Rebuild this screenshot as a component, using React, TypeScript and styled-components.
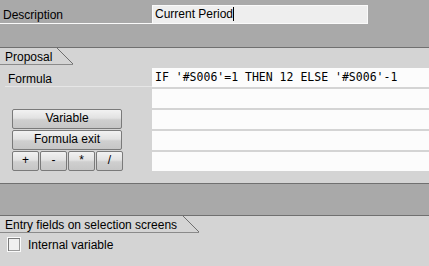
import React from 'react'
import styled, { createGlobalStyle } from 'styled-components'

const GlobalStyle = createGlobalStyle`
	body {
		margin: 0;
		background: #d4d4d4;
		font-family: "Liberation Sans", Arial, sans-serif;
		font-size: 12px;
		color: #000;
	}
`

const Screen = styled.div`
	width: 429px;
	height: 266px;
	overflow: hidden;
	background: #d4d4d4;
`

const Band = styled.div<{ $height: number; $top?: boolean }>`
	height: ${({ $height }) => $height}px;
	background: #a9a9a9;
	border-top: ${({ $top }) => ($top ? '1px solid #707070' : 'none')};
	border-bottom: 1px solid #707070;
`

const FieldRow = styled.div`
	display: flex;
	align-items: flex-start;
`

const BandLabel = styled.div`
	width: 152px;
	height: 24px;
	padding: 8px 0 0 3px;
	box-sizing: border-box;
	line-height: 14px;
	border-bottom: 1px solid #fafafa;
`

const TextInput = styled.div`
	margin-top: 5px;
	width: 216px;
	height: 19px;
	box-sizing: border-box;
	background: #eeeeee;
	border: 1px solid #fafafa;
	padding: 1px 0 0 2px;
	line-height: 14px;
`

const Caret = styled.span`
	display: inline-block;
	width: 1px;
	height: 14px;
	background: #000;
	vertical-align: top;
`

const TabStrip = styled.div`
	display: flex;
	height: 17px;
`

const TabLabel = styled.div<{ $width: number }>`
	width: ${({ $width }) => $width}px;
	padding: 3px 0 0 5px;
	box-sizing: border-box;
	line-height: 12px;
	white-space: nowrap;
	border-bottom: 1px solid #8a8a8a;
`

const TabCut = styled.div`
	width: 16px;
	border-bottom: 1px solid #8a8a8a;
	background: linear-gradient(
		to top right,
		transparent calc(50% - 0.7px),
		#6e6e6e calc(50% - 0.7px),
		#6e6e6e calc(50% + 0.7px),
		transparent calc(50% + 0.7px)
	);
`

const FormGrid = styled.div`
	display: grid;
	grid-template-columns: 152px 1fr;
	grid-auto-rows: 19px;
	row-gap: 2px;
	padding-top: 3px;
`

const RowLabel = styled.div`
	margin-left: 5px;
	padding: 4px 0 0 3px;
	line-height: 14px;
	border-bottom: 1px solid #e6e6e6;
`

const Cell = styled.div`
	display: flex;
	align-items: flex-start;
	padding-left: 12px;
`

const Field = styled.div`
	background: #fcfcfc;
	padding: 3px 0 0 3px;
	font-family: "DejaVu Sans Mono", "Liberation Mono", monospace;
	font-size: 11.5px;
	line-height: 13px;
	white-space: pre;
`

const Button = styled.div<{ $width: number }>`
	width: ${({ $width }) => $width}px;
	height: 20px;
	margin-top: -1px;
	box-sizing: border-box;
	border: 1px solid #7a7a7a;
	border-radius: 2px;
	background: linear-gradient(to bottom, #f2f2f2 0%, #e2e2e2 45%, #cfcfcf 55%, #c6c6c6 100%);
	text-align: center;
	line-height: 17px;
	& + & {
		margin-left: 1px;
	}
`

const CheckRow = styled.div`
	display: flex;
	align-items: center;
	gap: 7px;
	padding: 4px 0 0 7px;
`

const CheckBox = styled.div`
	width: 14px;
	height: 15px;
	box-sizing: border-box;
	background: #f0f0f0;
	border: 1px solid #fafafa;
	box-shadow: inset 1px 1px 0 #7a7a7a, inset -1px -1px 0 #9a9a9a;
`

const CheckLabel = styled.span`
	line-height: 14px;
`

const ops = ['+', '-', '*', '/']

export default function App() {
	return (
		<Screen>
			<GlobalStyle />
			<Band $height={47}>
				<FieldRow>
					<BandLabel>Description</BandLabel>
					<TextInput>
						Current Period
						<Caret />
					</TextInput>
				</FieldRow>
			</Band>

			<TabStrip>
				<TabLabel $width={57}>Proposal</TabLabel>
				<TabCut />
			</TabStrip>

			<FormGrid>
				<RowLabel>Formula</RowLabel>
				<Field>IF '#S006'=1 THEN 12 ELSE '#S006'-1</Field>
				<div />
				<Field />
				<Cell>
					<Button $width={110}>Variable</Button>
				</Cell>
				<Field />
				<Cell>
					<Button $width={110}>Formula exit</Button>
				</Cell>
				<Field />
				<Cell>
					{ops.map(op => (
						<Button key={op} $width={27}>
							{op}
						</Button>
					))}
				</Cell>
				<Field />
			</FormGrid>

			<div style={{ height: 12 }} />
			<Band $height={31} $top />

			<TabStrip>
				<TabLabel $width={183}>Entry fields on selection screens</TabLabel>
				<TabCut />
			</TabStrip>

			<CheckRow>
				<CheckBox />
				<CheckLabel>Internal variable</CheckLabel>
			</CheckRow>
		</Screen>
	)
}
